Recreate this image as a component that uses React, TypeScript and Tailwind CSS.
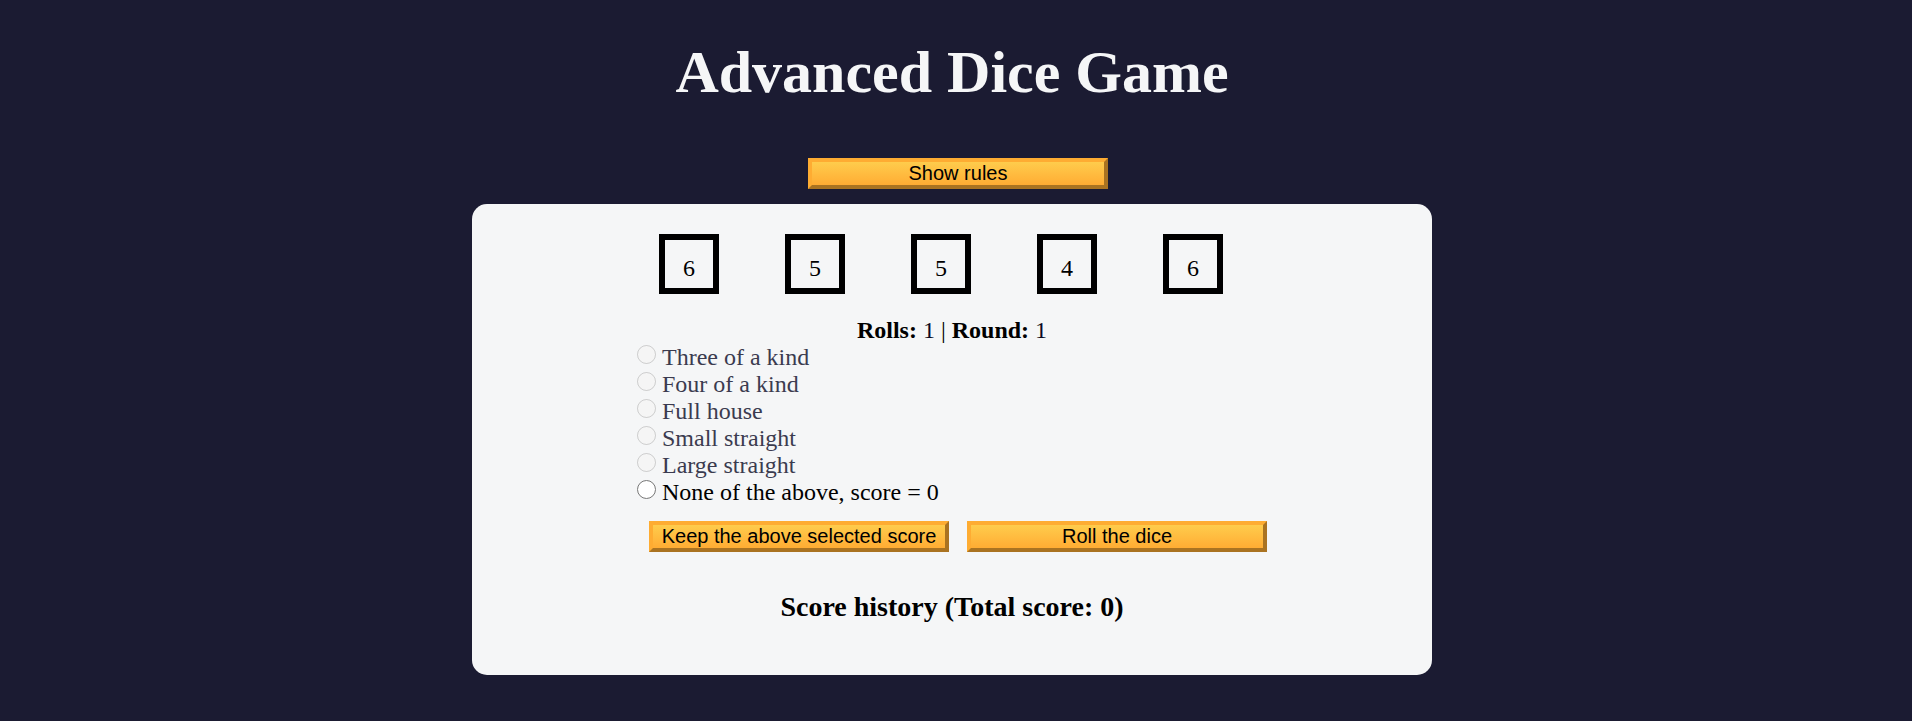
import { useState } from "react";
import type { ReactNode } from "react";

const dice = [6, 5, 5, 4, 6];

const options = [
  { id: "three-of-a-kind", label: "Three of a kind", disabled: true },
  { id: "four-of-a-kind", label: "Four of a kind", disabled: true },
  { id: "full-house", label: "Full house", disabled: true },
  { id: "small-straight", label: "Small straight", disabled: true },
  { id: "large-straight", label: "Large straight", disabled: true },
  { id: "none", label: "None of the above, score = 0", disabled: false },
];

function GoldButton({ children }: { children: ReactNode }) {
  return (
    <button
      type="button"
      className="w-[300px] cursor-pointer border-4 border-[#feac32] bg-linear-to-b from-[#fecc4c] to-[#ffac33] font-['Liberation_Sans',Arial,sans-serif] text-xl leading-[23px] text-black [border-style:outset]"
    >
      {children}
    </button>
  );
}

export default function App() {
  const [selected, setSelected] = useState("");

  return (
    <div className="flex min-h-screen flex-col items-center bg-[#1b1b32] pt-[38px] pr-2 pb-10 font-['Liberation_Serif','Times_New_Roman',serif] text-2xl leading-[27px] text-black">
      <h1 className="text-center text-[60px] leading-[69px] font-bold text-[#f5f6f7]">
        Advanced Dice Game
      </h1>
      <div className="mt-[51px] pl-3">
        <GoldButton>Show rules</GoldButton>
      </div>
      <main className="mt-[15px] flex w-full max-w-[960px] flex-col items-center rounded-[15px] bg-[#f5f6f7] pt-[30px] pb-[52px]">
        <div className="flex gap-[66px] pr-[22px]">
          {dice.map((value, index) => (
            <div
              key={index}
              className="size-15 border-6 border-black pt-[15px] text-center"
            >
              {value}
            </div>
          ))}
        </div>
        <p className="mt-[23px]">
          <strong>Rolls:</strong> <span className="text-[#0a0a23]">1</span> |{" "}
          <strong>Round:</strong> <span className="text-[#0a0a23]">1</span>
        </p>
        <form className="w-[630px] max-w-full">
          {options.map(({ id, label, disabled }) => (
            <div key={id} className="flex items-start gap-1.5">
              <input
                type="radio"
                id={id}
                name="score"
                value={id}
                disabled={disabled}
                checked={selected === id}
                onChange={() => setSelected(id)}
                className="mt-px size-[19px]"
              />
              <label
                htmlFor={id}
                className={disabled ? "text-[#3b3b4f]" : "text-black"}
              >
                {label}
              </label>
            </div>
          ))}
        </form>
        <div className="mt-[15px] flex flex-wrap justify-center gap-[18px] pl-3">
          <GoldButton>Keep the above selected score</GoldButton>
          <GoldButton>Roll the dice</GoldButton>
        </div>
        <h2 className="mt-[39px] text-[28px] leading-8 font-bold">
          Score history (Total score: 0)
        </h2>
      </main>
    </div>
  );
}
